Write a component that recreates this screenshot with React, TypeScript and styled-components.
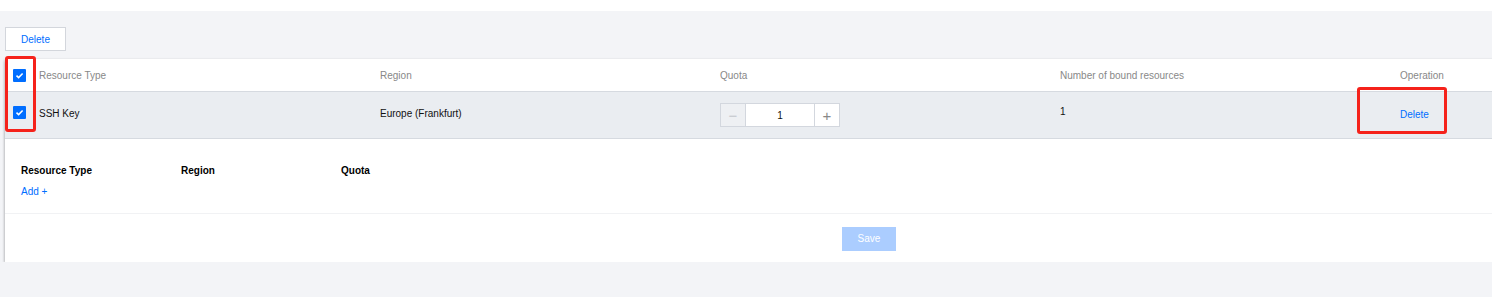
import React from "react";
import styled, { createGlobalStyle } from "styled-components";

const GlobalStyle = createGlobalStyle`
  html, body {
    margin: 0;
    padding: 0;
    background: #f3f4f7;
    overflow: hidden;
  }
  body {
    font-family: "Liberation Sans", Arial, sans-serif;
    font-size: 10px;
    color: #000;
  }
`;

const TopBar = styled.div`
  height: 11px;
  background: #fff;
`;

const Main = styled.main`
  position: relative;
  width: 1728px;
  padding: 16px 0 0 5px;
`;

const ToolButton = styled.button`
  display: block;
  width: 61px;
  height: 24px;
  padding: 0;
  border: 1px solid #d3d6dc;
  background: #fff;
  color: #006eff;
  font-family: inherit;
  font-size: 10px;
  cursor: pointer;
`;

const Card = styled.div`
  margin-top: 8px;
  background: #fff;
  box-shadow: 0 2px 3px rgba(0, 0, 0, 0.28), -1px 0 2px rgba(0, 0, 0, 0.08);
`;

const Row = styled.div<{ head?: boolean }>`
  display: grid;
  grid-template-columns: 34px 341px 340px 340px 340px 1fr;
  height: ${({ head }) => (head ? "32px" : "46px")};
  align-items: center;
  background: ${({ head }) => (head ? "#fff" : "#eaedf1")};
  border-bottom: 1px solid #d6dae0;
  color: ${({ head }) => (head ? "#888" : "#111")};
`;

const CheckCell = styled.div<{ shift?: number }>`
  padding-left: 8px;
  margin-top: ${({ shift }) => shift || 0}px;
  display: flex;
`;

const Check = styled.span`
  width: 13px;
  height: 13px;
  border-radius: 1px;
  background: #006eff;
  display: flex;
  align-items: center;
  justify-content: center;
`;

const Cell = styled.div<{ shift?: number }>`
  margin-top: ${({ shift }) => shift || 0}px;
`;

const LinkText = styled.span`
  color: #006eff;
  cursor: pointer;
`;

const Stepper = styled.div`
  display: flex;
  width: 118px;
  height: 22px;
  border: 1px solid #d3d7de;
`;

const StepBtn = styled.span<{ disabled?: boolean }>`
  width: 24px;
  display: flex;
  align-items: center;
  justify-content: center;
  background: ${({ disabled }) => (disabled ? "#eef0f3" : "#fff")};
  color: ${({ disabled }) => (disabled ? "#c4c7cc" : "#888")};
  font-size: 15px;
  line-height: 1;
`;

const StepValue = styled.span`
  flex: 1;
  display: flex;
  align-items: center;
  justify-content: center;
  border-left: 1px solid #d3d7de;
  border-right: 1px solid #d3d7de;
  background: #fff;
`;

const AddPanel = styled.div`
  padding: 26px 0 0 16px;
  height: 48px;
  border-bottom: 1px solid #f1f2f4;
`;

const LabelRow = styled.div`
  display: grid;
  grid-template-columns: 160px 160px 160px;
  font-weight: bold;
  color: #000;
  line-height: 12px;
`;

const AddLink = styled(LinkText)`
  display: block;
  margin-top: 9px;
  line-height: 12px;
`;

const Footer = styled.div`
  height: 48px;
  display: flex;
  align-items: center;
  justify-content: center;
`;

const SaveButton = styled.button`
  width: 54px;
  height: 24px;
  margin-top: 1px;
  border: none;
  padding: 0;
  background: #abcdff;
  color: #fff;
  font-family: inherit;
  font-size: 10px;
`;

const Highlight = styled.div<{ x: number; y: number; w: number; h: number }>`
  position: absolute;
  left: ${({ x }) => x}px;
  top: ${({ y }) => y}px;
  width: ${({ w }) => w}px;
  height: ${({ h }) => h}px;
  box-sizing: border-box;
  border: 3px solid #f5221b;
  border-radius: 3px;
  pointer-events: none;
`;

const Tick = () => (
  <svg width="9" height="9" viewBox="0 0 9 9">
    <path d="M1.5 4.6 L3.6 6.6 L7.6 2.4" fill="none" stroke="#fff" strokeWidth="1.5" />
  </svg>
);

export default function App() {
  return (
    <>
      <GlobalStyle />
      <TopBar />
      <Main>
        <ToolButton>Delete</ToolButton>
        <Card>
          <Row head>
            <CheckCell>
              <Check>
                <Tick />
              </Check>
            </CheckCell>
            <Cell>Resource Type</Cell>
            <Cell>Region</Cell>
            <Cell>Quota</Cell>
            <Cell>Number of bound resources</Cell>
            <Cell>Operation</Cell>
          </Row>
          <Row>
            <CheckCell shift={-6}>
              <Check>
                <Tick />
              </Check>
            </CheckCell>
            <Cell shift={-3}>SSH Key</Cell>
            <Cell shift={-3}>Europe (Frankfurt)</Cell>
            <Cell>
              <Stepper>
                <StepBtn disabled>−</StepBtn>
                <StepValue>1</StepValue>
                <StepBtn>+</StepBtn>
              </Stepper>
            </Cell>
            <Cell shift={-8}>1</Cell>
            <Cell shift={-2}>
              <LinkText>Delete</LinkText>
            </Cell>
          </Row>
          <AddPanel>
            <LabelRow>
              <span>Resource Type</span>
              <span>Region</span>
              <span>Quota</span>
            </LabelRow>
            <AddLink>Add +</AddLink>
          </AddPanel>
          <Footer>
            <SaveButton>Save</SaveButton>
          </Footer>
        </Card>
        <Highlight x={5} y={45} w={31} h={76} />
        <Highlight x={1357} y={76} w={90} h={47} />
      </Main>
    </>
  );
}
